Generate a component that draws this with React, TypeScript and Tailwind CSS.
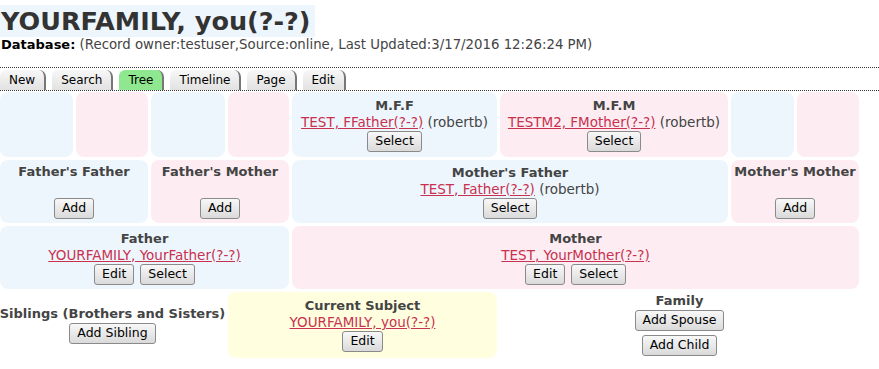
import React from "react";

const font = "font-['DejaVu_Sans',Verdana,sans-serif]";

const Btn = ({ label }: { label: string }) => (
  <button className="h-[21px] px-[7px] border border-[#8a8a8a] rounded-[3px] bg-gradient-to-b from-[#f8f8f8] to-[#dadada] text-[12.5px] leading-none text-black whitespace-nowrap">
    {label}
  </button>
);

const Name = ({ text, owner }: { text: string; owner?: string }) => (
  <div className="h-[16px] leading-[16px] text-[13.5px] whitespace-nowrap">
    <a className="text-[#c8314f] underline cursor-pointer">{text}</a>
    {owner && <span className="text-[#444]"> ({owner})</span>}
  </div>
);

const Head = ({ text }: { text: string }) => (
  <div className="h-[16px] leading-[16px] text-[13px] font-bold text-[#444] whitespace-nowrap">{text}</div>
);

type CellProps = {
  span?: string;
  bg?: string;
  title?: string;
  name?: string;
  owner?: string;
  buttons?: string[];
  emptyLine?: boolean;
};

const Cell = ({ span = "", bg = "", title, name, owner, buttons = [], emptyLine }: CellProps) => (
  <div className={`${span} ${bg} rounded-[8px] flex flex-col items-center justify-center text-center`}>
    {title && <Head text={title} />}
    {name ? <Name text={name} owner={owner} /> : emptyLine && <div className="h-[17px]" />}
    {buttons.length > 0 && (
      <div className="flex gap-[6px] mt-[1px]">
        {buttons.map((b) => (
          <Btn key={b} label={b} />
        ))}
      </div>
    )}
  </div>
);

const tabs = ["New", "Search", "Tree", "Timeline", "Page", "Edit"];

export default function App() {
  const blue = "bg-[#eef6fd]";
  const pink = "bg-[#fdedf2]";

  return (
    <div className={`${font} w-[879px] h-[369px] bg-white overflow-hidden text-[#333]`}>
      <div className="pt-[5px]">
        <h1 className="inline-block bg-[#eef6fd] pl-[1px] pr-[4px] h-[32px] leading-[32px] text-[25.5px] font-bold text-[#333]">
          YOURFAMILY, you(?-?)
        </h1>
      </div>
      <div className="text-[13.3px] leading-[15px] text-[#444] pl-[1px] whitespace-nowrap">
        <span className="font-bold text-black text-[13px]">Database:</span> (Record owner:testuser,Source:online, Last Updated:3/17/2016 12:26:24 PM)
      </div>

      <div className="mt-[15px] border-t border-b border-dotted border-[#333] h-[24px] flex items-end gap-[6px] pt-[1px]">
        {tabs.map((t) => (
          <div
            key={t}
            className={`h-[20px] px-[9px] text-[12px] leading-[20px] text-black rounded-tl-[6px] rounded-tr-[7px] border-r-2 border-[#777] ${
              t === "Tree" ? "bg-[#8fe88f]" : "bg-gradient-to-b from-[#f7f7f7] to-[#e2e2e2]"
            }`}
          >
            {t}
          </div>
        ))}
      </div>

      <div className="mt-[1px] grid grid-cols-[73px_72px_74px_61px_205px_228px_63px_62px] grid-rows-[65px_63px_63px_66px] gap-[3px]">
        <div className={`${blue} rounded-[8px]`} />
        <div className={`${pink} rounded-[8px]`} />
        <div className={`${blue} rounded-[8px]`} />
        <div className={`${pink} rounded-[8px]`} />
        <Cell bg={blue} title="M.F.F" name="TEST, FFather(?-?)" owner="robertb" buttons={["Select"]} />
        <Cell bg={pink} title="M.F.M" name="TESTM2, FMother(?-?)" owner="robertb" buttons={["Select"]} />
        <div className={`${blue} rounded-[8px]`} />
        <div className={`${pink} rounded-[8px]`} />

        <Cell span="col-span-2" bg={blue} title="Father's Father" emptyLine buttons={["Add"]} />
        <Cell span="col-span-2" bg={pink} title="Father's Mother" emptyLine buttons={["Add"]} />
        <Cell span="col-span-2" bg={blue} title="Mother's Father" name="TEST, Father(?-?)" owner="robertb" buttons={["Select"]} />
        <Cell span="col-span-2" bg={pink} title="Mother's Mother" emptyLine buttons={["Add"]} />

        <Cell span="col-span-4" bg={blue} title="Father" name="YOURFAMILY, YourFather(?-?)" buttons={["Edit", "Select"]} />
        <Cell span="col-span-4" bg={pink} title="Mother" name="TEST, YourMother(?-?)" buttons={["Edit", "Select"]} />

        <Cell span="col-span-3" title="Siblings (Brothers and Sisters)" buttons={["Add Sibling"]} />
        <Cell span="col-span-2" bg="bg-[#ffffe0]" title="Current Subject" name="YOURFAMILY, you(?-?)" buttons={["Edit"]} />
        <div className="col-span-3 flex flex-col items-center justify-center gap-[4px] -mt-[2px]">
          <div className="-mb-[3px]">
            <Head text="Family" />
          </div>
          <Btn label="Add Spouse" />
          <Btn label="Add Child" />
        </div>
      </div>
    </div>
  );
}
